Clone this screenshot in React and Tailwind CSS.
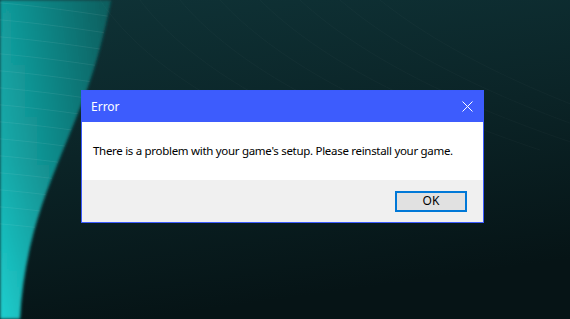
import React from "react";

const TEAL_SHAPE =
  "M0 0 L111 0 C104 35 96 65 86 92 C70 135 54 170 42 205 C30 240 22 280 20 319 L0 319 Z";

function Wallpaper() {
  return (
    <svg className="absolute inset-0" width="570" height="319" viewBox="0 0 570 319">
      <defs>
        <linearGradient id="bg" x1="0" y1="0" x2="0.25" y2="1">
          <stop offset="0" stopColor="#0f3337" />
          <stop offset="0.5" stopColor="#0b2427" />
          <stop offset="1" stopColor="#061416" />
        </linearGradient>
        <linearGradient id="teal" x1="0" y1="0" x2="0" y2="1">
          <stop offset="0" stopColor="#119c9c" />
          <stop offset="0.5" stopColor="#14acac" />
          <stop offset="1" stopColor="#1dcfcf" />
        </linearGradient>
        <linearGradient id="shade" x1="0" y1="0" x2="110" y2="0" gradientUnits="userSpaceOnUse">
          <stop offset="0" stopColor="#000" stopOpacity="0" />
          <stop offset="1" stopColor="#000" stopOpacity="0.4" />
        </linearGradient>
        <filter id="soft" x="-20%" y="-20%" width="140%" height="140%">
          <feGaussianBlur stdDeviation="1.5" />
        </filter>
        <clipPath id="tealClip">
          <path d={TEAL_SHAPE} />
        </clipPath>
      </defs>
      <rect width="570" height="319" fill="url(#bg)" />
      <g filter="url(#soft)">
        <path d={TEAL_SHAPE} fill="url(#teal)" />
        <path d={TEAL_SHAPE} fill="url(#shade)" />
      </g>
      <g clipPath="url(#tealClip)">
        {[0, 1, 2, 3, 4, 5, 6, 7, 8, 9, 10, 11, 12, 13].map((i) => (
          <path
            key={i}
            d={`M-10 ${2 + i * 17} C 40 ${6 + i * 17} 80 ${12 + i * 17} 120 ${18 + i * 17}`}
            stroke="#ffffff"
            strokeOpacity="0.07"
            fill="none"
          />
        ))}
      </g>
      {[0, 1, 2, 3, 4, 5, 6, 7].map((i) => (
        <path
          key={i}
          d={`M${100 + i * 40} 0 C ${140 + i * 45} 60 ${220 + i * 50} 110 ${320 + i * 55} 150`}
          stroke="#ffffff"
          strokeOpacity="0.025"
          fill="none"
        />
      ))}
    </svg>
  );
}

export default function App() {
  return (
    <div className="relative h-[319px] w-[570px] overflow-hidden bg-[#0b2225] font-['Noto_Sans','Open_Sans',sans-serif]">
      <Wallpaper />
      <div className="absolute left-[81px] top-[90px] flex w-[403px] flex-col border border-[#3b5bfd] bg-white">
        <div className="flex h-[31px] items-center justify-between bg-[#3d5cfd] pl-[9px] pr-[9px]">
          <span className="text-[12px] text-white">Error</span>
          <svg width="11" height="11" viewBox="0 0 11 11" className="mr-[1px]">
            <path d="M0.5 0.5 L10.5 10.5 M10.5 0.5 L0.5 10.5" stroke="#fff" strokeWidth="1" />
          </svg>
        </div>
        <div className="flex h-[58px] items-center whitespace-nowrap pl-[11px] text-[11.5px] tracking-[-0.3px] text-black">
          There is a problem with your game's setup. Please reinstall your game.
        </div>
        <div className="flex h-[42px] items-center justify-end bg-[#f0f0f0] pr-[16px]">
          <div className="flex h-[21px] w-[72px] items-center justify-center border-2 border-[#0078d7] bg-[#e1e1e1] text-[12px] text-black">
            OK
          </div>
        </div>
      </div>
    </div>
  );
}
